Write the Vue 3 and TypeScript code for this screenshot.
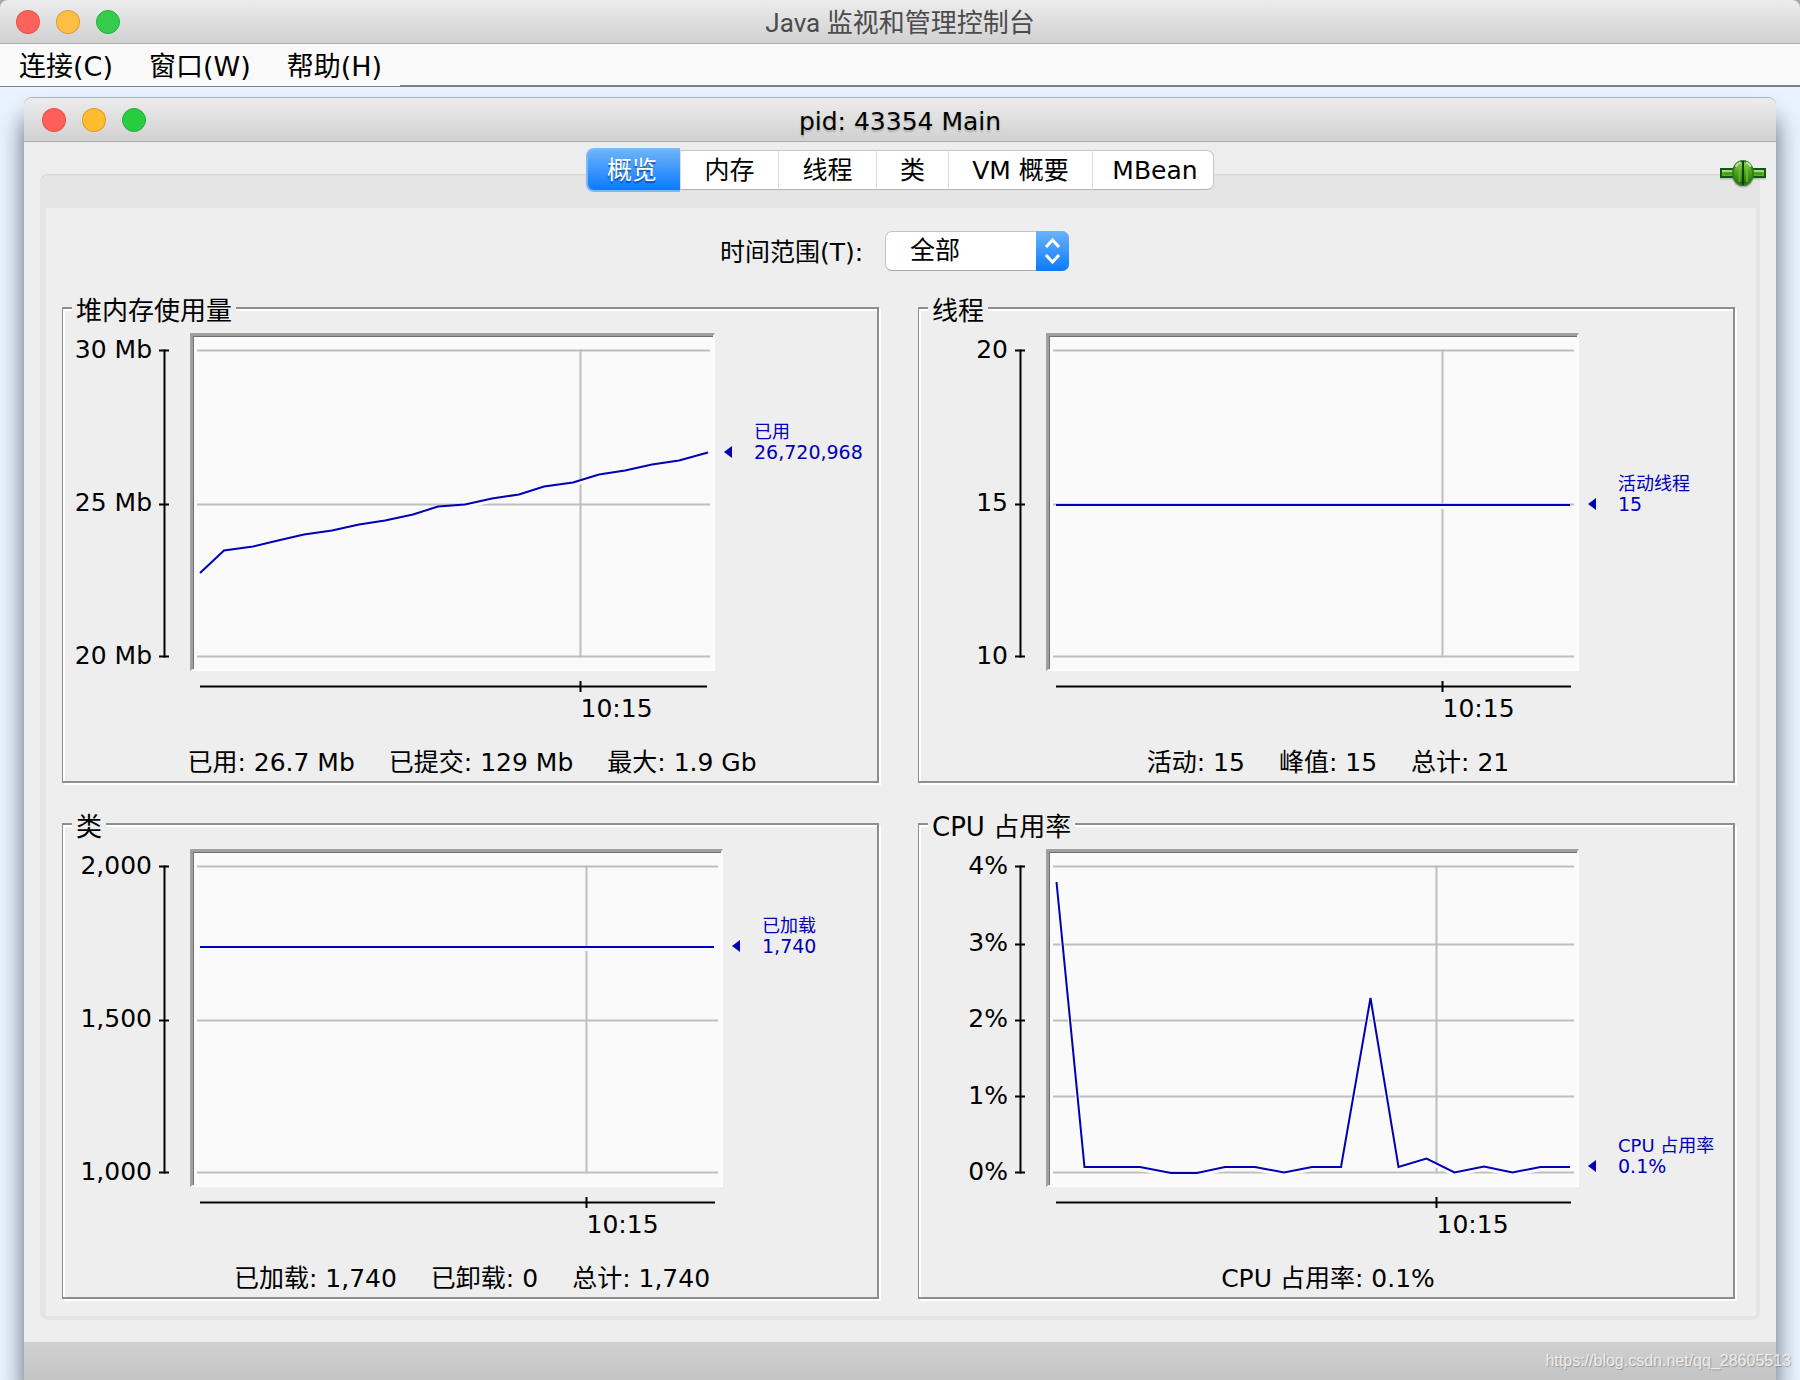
<script setup lang="ts">
import { ref } from 'vue'

type Point = [number, number]

interface Chart {
  id: string
  title: string
  yLabels: string[]
  grid: number[]
  width: number
  tick: number
  line: Point[]
  series: string
  value: string
  markerTop: number
  wideSide?: boolean
  summary: string[]
}

const PLOT_HEIGHT = 333

const menus = ['连接(C)', '窗口(W)', '帮助(H)']
const tabs = ['概览', '内存', '线程', '类', 'VM 概要', 'MBean']
const activeTab = ref('概览')
const range = ref('全部')
const ranges = ['全部', '1 分钟', '5 分钟', '10 分钟', '30 分钟', '1 小时']

const charts: Chart[] = [
  {
    id: 'heap',
    title: '堆内存使用量',
    yLabels: ['30 Mb', '25 Mb', '20 Mb'],
    grid: [14.5, 168.5, 320.5],
    width: 520,
    tick: 387.5,
    line: [
      [7, 237], [31, 214.5], [60, 210.5], [85, 204.5], [111, 198.5], [139, 194.5], [166, 188.5],
      [192, 184.5], [220, 178.5], [245, 170.5], [272, 168.5], [299, 162.5], [326, 158.5],
      [351, 150.5], [380, 146.5], [406, 138.5], [432, 134.5], [459, 128.5], [486, 124.5], [515, 116.5],
    ],
    series: '已用',
    value: '26,720,968',
    markerTop: 89,
    wideSide: true,
    summary: ['已用: 26.7 Mb', '已提交: 129 Mb', '最大: 1.9 Gb'],
  },
  {
    id: 'threads',
    title: '线程',
    yLabels: ['20', '15', '10'],
    grid: [14.5, 168.5, 320.5],
    width: 528,
    tick: 393.5,
    line: [[7, 169], [521, 169]],
    series: '活动线程',
    value: '15',
    markerTop: 141,
    summary: ['活动: 15', '峰值: 15', '总计: 21'],
  },
  {
    id: 'classes',
    title: '类',
    yLabels: ['2,000', '1,500', '1,000'],
    grid: [14.5, 168.5, 320.5],
    width: 528,
    tick: 393.5,
    line: [[7, 95], [521, 95]],
    series: '已加载',
    value: '1,740',
    markerTop: 67,
    summary: ['已加载: 1,740', '已卸载: 0', '总计: 1,740'],
  },
  {
    id: 'cpu',
    title: 'CPU 占用率',
    yLabels: ['4%', '3%', '2%', '1%', '0%'],
    grid: [14.5, 92.5, 168.5, 244.5, 320.5],
    width: 528,
    tick: 387.5,
    line: [
      [7.5, 30], [35.5, 315], [91, 315], [122, 321], [148, 321], [176, 315], [206, 315], [235, 320.5],
      [263, 315], [292, 315], [321.5, 146], [349.5, 315], [377.5, 306.5], [405.5, 320.5],
      [435, 314.5], [463.5, 320.5], [491.5, 315], [521, 315],
    ],
    series: 'CPU 占用率',
    value: '0.1%',
    markerTop: 287,
    summary: ['CPU 占用率: 0.1%'],
  },
]

const toPoints = (line: Point[], dy = 0) => line.map(([x, y]) => `${x},${y + dy}`).join(' ')
const tickShare = (c: Chart) => `${((c.tick + 3) / (c.width + 5)) * 100}%`
</script>

<template>
  <div class="console">
    <header class="titlebar outer">
      <div class="lights"><i class="red"></i><i class="amber"></i><i class="green"></i></div>
      <h1>Java 监视和管理控制台</h1>
    </header>

    <nav class="menubar" aria-label="菜单">
      <div class="menus">
        <button v-for="m in menus" :key="m" type="button">{{ m }}</button>
      </div>
      <div class="menu-rest"></div>
    </nav>

    <main class="desktop">
      <section class="window">
        <header class="titlebar inner">
          <div class="lights"><i class="red"></i><i class="amber"></i><i class="green"></i></div>
          <h2>pid: 43354 Main</h2>
        </header>

        <div class="window-body">
          <div class="tabs" role="tablist">
            <button
              v-for="t in tabs"
              :key="t"
              type="button"
              role="tab"
              :aria-selected="t === activeTab"
              :class="{ active: t === activeTab }"
              @click="activeTab = t"
            >{{ t }}</button>
          </div>

          <svg class="plug" width="46" height="28" viewBox="0 0 46 28" role="img" aria-label="已连接">
            <defs>
              <linearGradient id="plugBody" x1="0" y1="0" x2="0" y2="1">
                <stop offset="0" stop-color="#9ed66c" />
                <stop offset="0.4" stop-color="#55ab18" />
                <stop offset="0.75" stop-color="#348c0c" />
                <stop offset="1" stop-color="#0f4a0a" />
              </linearGradient>
            </defs>
            <ellipse cx="23" cy="16" rx="11" ry="11.5" fill="#000" opacity="0.22" />
            <rect x="0" y="10" width="46" height="9.5" rx="1" fill="#000" opacity="0.18" />
            <rect x="1" y="9" width="44" height="8" fill="#5fae30" stroke="#0d5a0c" stroke-width="2" />
            <path d="M2 11h42" stroke="#a5d883" stroke-width="2" />
            <path d="M4 13.5h38" stroke="#439512" stroke-width="2" />
            <ellipse cx="23" cy="13" rx="10" ry="12" fill="url(#plugBody)" stroke="#317c27" stroke-width="2" />
            <path d="M15.500 6.500q2-3 5-4M26 2.500q3 1 5 4" fill="none" stroke="#c6e8a4" stroke-width="2" />
            <path d="M19.500 4v18M27 4v18" stroke="#78bf3c" stroke-width="2" opacity="0.7" />
            <path d="M23 1v24" stroke="#0b4208" stroke-width="2" />
          </svg>

          <div class="pane">
            <div class="overview">
              <div class="range">
                <label for="range">时间范围(T):</label>
                <div class="select">
                  <select id="range" v-model="range">
                    <option v-for="r in ranges" :key="r">{{ r }}</option>
                  </select>
                  <svg class="stepper" width="33" height="40" viewBox="0 0 33 40" aria-hidden="true">
                    <path d="M10 16l6.500-7 6.500 7M10 24l6.500 7 6.500-7" fill="none" stroke="#fff" stroke-width="3" />
                  </svg>
                </div>
              </div>

              <div class="charts">
                <fieldset v-for="c in charts" :key="c.id">
                  <legend>{{ c.title }}</legend>

                  <div class="row">
                    <div class="axis-col">
                      <div class="y-labels">
                        <span v-for="l in c.yLabels" :key="l">{{ l }}</span>
                      </div>
                      <svg class="y-axis" width="12" height="338" viewBox="0 0 12 338" aria-hidden="true">
                        <path d="M5.500 16.500V324.500" />
                        <path v-for="g in c.grid" :key="g" :d="`M0 ${g + 3}H10`" />
                      </svg>
                    </div>

                    <div class="plot">
                      <svg :viewBox="`0 0 ${c.width} ${PLOT_HEIGHT}`" preserveAspectRatio="none" role="img" :aria-label="c.title">
                        <g class="grid">
                          <path v-for="g in c.grid" :key="g" :d="`M4 ${g}H${c.width - 3}`" />
                          <path :d="`M${c.tick} 13.500V321.500`" />
                        </g>
                        <polyline class="halo" :points="toPoints(c.line, 2)" />
                        <polyline class="series" :points="toPoints(c.line)" />
                      </svg>
                    </div>

                    <div class="side" :class="{ wide: c.wideSide }">
                      <div class="marker" :style="{ marginTop: c.markerTop + 'px' }">
                        <svg width="8" height="12" viewBox="0 0 8 12" aria-hidden="true"><path d="M8 0v12L0 6z" fill="#0000b4" /></svg>
                        <p><span>{{ c.series }}</span><span class="value">{{ c.value }}</span></p>
                      </div>
                    </div>
                  </div>

                  <div class="row time">
                    <div class="axis-col"></div>
                    <div class="time-axis">
                      <svg :viewBox="`0 0 ${c.width + 5} 12`" preserveAspectRatio="none" aria-hidden="true">
                        <path :d="`M10 5.500H${c.width - 3}M${c.tick + 3} 0V11`" />
                      </svg>
                      <span :style="{ marginLeft: tickShare(c) }">10:15</span>
                    </div>
                    <div class="side" :class="{ wide: c.wideSide }"></div>
                  </div>

                  <p class="summary">
                    <span v-for="s in c.summary" :key="s">{{ s }}</span>
                  </p>
                </fieldset>
              </div>
            </div>
          </div>
        </div>

        <footer class="statusbar"></footer>
      </section>
      <span class="watermark">https://blog.csdn.net/qq_28605513</span>
    </main>
  </div>
</template>

<style>
body {
  margin: 0;
  background: #a8a8a8;
}
</style>

<style scoped>
.console {
  --ui: "DejaVu Sans", "Noto Sans CJK SC", sans-serif;
  display: flex;
  flex-direction: column;
  min-height: 100vh;
  font-family: var(--ui);
  font-size: 25px;
  line-height: 28px;
  color: #000;
}
.console * {
  box-sizing: border-box;
}
h1, h2, p {
  margin: 0;
  font-weight: 400;
}
button, select {
  font: inherit;
  color: inherit;
}
.titlebar {
  display: grid;
  grid-template-columns: 1fr auto 1fr;
  align-items: center;
  height: 44px;
  background: linear-gradient(#ececec, #d1d1d1);
  border-bottom: 1px solid #adadad;
  border-radius: 8px 8px 0 0;
}
.titlebar.outer {
  padding: 0 16px;
}
.titlebar.inner {
  padding: 0 18px;
}
h1 {
  padding-top: 2px;
  font-family: Roboto, "Noto Sans CJK SC", sans-serif;
  font-size: 26px;
  color: #4b4b4b;
}
h2 {
  padding-top: 4px;
  font-size: 25px;
  text-shadow: 0 2px 2px rgba(0, 0, 0, 0.2);
}
.lights {
  display: flex;
  gap: 16px;
}
.lights i {
  width: 24px;
  height: 24px;
  border: 1px solid rgba(170, 40, 0, 0.25);
  border-radius: 50%;
}
.lights .red { background-color: #fe5f58; }
.lights .amber { background-color: #febd2f; }
.lights .green { background-color: #29cb41; border-color: #1fb035; }
.outer .red { background-color: #fe625c; }
.outer .amber { background-color: #febf45; }
.outer .green { background-color: #36cb4b; }

.menubar {
  display: flex;
  height: 43px;
  background: #fafafa;
}
.menus {
  display: flex;
  gap: 36px;
  width: 400px;
  padding: 4px 0 0 19px;
  border-bottom: 1px solid #7e827f;
}
.menus button {
  padding: 0;
  border: 0;
  background: none;
  font-size: 27px;
  white-space: nowrap;
}
.menu-rest {
  flex: 1;
  border-bottom: 2px solid #7e827f;
}

.desktop {
  position: relative;
  display: flex;
  flex: 1;
  padding: 11px 24px 0;
  background: #e8f3ff;
  overflow: hidden;
}
.window {
  display: flex;
  flex: 1;
  flex-direction: column;
  border-radius: 8px 8px 0 0;
  background: #ededed;
  box-shadow: 0 -1px 0 #a9b4be, 0 20px 24px rgba(0, 10, 20, 0.6);
}
.window-body {
  position: relative;
  padding: 6px 16px 22px;
}
.tabs {
  position: relative;
  z-index: 1;
  display: grid;
  grid-template-columns: 94px 98px 98px 72px 144px 122px;
  width: fit-content;
  height: 44px;
  margin: 0 auto;
  padding: 2px 0;
}
.tabs button {
  padding: 2px 0 0;
  border: 1px solid #c6c6c6;
  border-left-color: #dedede;
  border-right: 0;
  border-bottom-color: #b2b2b2;
  background: #fff;
  white-space: nowrap;
}
.tabs button:last-child {
  padding-left: 4px;
  border-right: 1px solid #c6c6c6;
  border-radius: 0 7px 7px 0;
}
.tabs button.active {
  margin: -2px 0;
  padding-right: 4px;
  border: 2px solid #7fb8f5;
  border-right: 0;
  border-radius: 8px 0 0 8px;
  background: linear-gradient(#6cb3fa, #0a7aff);
  color: #fff;
  text-shadow: 0 2px 1px rgba(0, 40, 120, 0.6);
}
.plug {
  position: absolute;
  top: 18px;
  right: 10px;
  z-index: 2;
}
.pane {
  margin-top: -18px;
  padding: 33px 4px 4px 6px;
  border-top: 1px solid #d5d5d5;
  border-radius: 8px;
  background: #e4e4e4;
}
.overview {
  padding: 23px 21px 17px 16px;
  background: #eee;
}
.range {
  display: flex;
  align-items: center;
  justify-content: center;
  gap: 22px;
  padding-right: 8px;
}
.range label {
  padding-top: 4px;
}
.select {
  position: relative;
  width: 184px;
  height: 40px;
}
.select select {
  appearance: none;
  width: 100%;
  height: 100%;
  padding: 0 40px 0 24px;
  border: 1px solid #c4c4c4;
  border-bottom-color: #a8a8a8;
  border-radius: 7px;
  background: #fff;
}
.stepper {
  position: absolute;
  top: 0;
  right: 0;
  border-radius: 0 7px 7px 0;
  background: linear-gradient(#6cb3fa, #0a7aff);
  pointer-events: none;
}
.charts {
  display: grid;
  grid-template-columns: 1fr 1fr;
  gap: 24px 39px;
  margin-top: 20px;
}
fieldset {
  min-width: 0;
  margin: 0;
  padding: 8px 0 4px;
  border: 2px solid #8e8e8e;
  border-left-width: 1px;
  box-shadow: 2px 2px 0 #fff, inset 2px 2px 0 #fff;
}
legend {
  margin-left: 9px;
  padding: 6px 4px 0;
  background: #eee;
  font-size: 26px;
}
.row {
  display: flex;
}
.axis-col {
  display: flex;
  flex: none;
  justify-content: flex-end;
  width: 127px;
  padding-right: 19px;
}
.y-labels {
  display: flex;
  flex-direction: column;
  justify-content: space-between;
  margin-right: 7px;
  padding: 3px 0 1px;
  text-align: right;
  white-space: nowrap;
}
.y-axis path,
.time-axis path {
  fill: none;
  stroke: #000;
  stroke-width: 2;
  vector-effect: non-scaling-stroke;
}
.plot {
  flex: 1;
  min-width: 0;
  height: 338px;
  border: 3px solid #a0a0a0;
  border-right: 2px solid #fff;
  border-bottom: 2px solid #fff;
  background: #fafafa;
  box-shadow: inset 1px 1px 0 #707070;
}
.plot svg {
  display: block;
  width: 100%;
  height: 333px;
}
.grid path,
.plot polyline {
  fill: none;
  stroke-width: 2;
  vector-effect: non-scaling-stroke;
}
.grid path { stroke: #bebebe; }
.plot .halo { stroke: #fafafa; stroke-width: 4; }
.plot .series { stroke: #0000b4; }
.side {
  flex: none;
  width: 154px;
}
.side.wide {
  width: 162px;
}
.marker {
  display: flex;
  align-items: flex-end;
  gap: 22px;
  padding-left: 9px;
  color: #0000b4;
  font-size: 18px;
  line-height: 20px;
  white-space: nowrap;
}
.marker svg {
  flex: none;
  margin-bottom: 4px;
}
.marker span {
  display: block;
}
.marker .value {
  font-size: 19px;
}
.time {
  margin-top: 10px;
}
.time-axis {
  flex: 1;
  min-width: 0;
}
.time-axis svg {
  display: block;
  width: 100%;
  height: 12px;
}
.time-axis span {
  display: block;
  padding-top: 2px;
}
.summary {
  display: flex;
  justify-content: center;
  gap: 34px;
  margin-top: 26px;
  padding-left: 4px;
  white-space: nowrap;
}
.statusbar {
  flex: 1;
  min-height: 36px;
  background: linear-gradient(#d0d0d0, #c4c4c4);
}
.watermark {
  position: absolute;
  right: 9px;
  bottom: 5px;
  color: #ececec;
  font-family: "Liberation Sans", sans-serif;
  font-size: 16px;
  text-shadow: 1px 1px 1px rgba(0, 0, 0, 0.25);
}
</style>
